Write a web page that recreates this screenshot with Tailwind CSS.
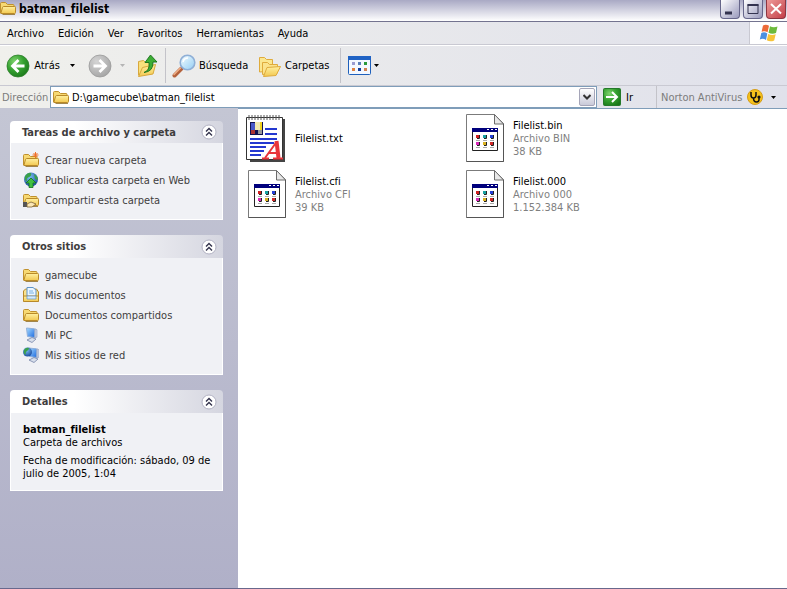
<!DOCTYPE html>
<html lang="es">
<head>
  <meta charset="UTF-8">
  <meta name="viewport" content="width=device-width, initial-scale=1.0">
  <title>batman_filelist</title>
  <script src="https://cdn.jsdelivr.net/npm/@tailwindcss/browser@4"></script>
</head>
<body class="min-h-screen flex flex-col overflow-hidden bg-white text-black text-[11px] leading-[13px] font-['Tahoma','DejaVu_Sans_Condensed','DejaVu_Sans',sans-serif]">

  <!-- shared icons -->
  <svg class="absolute w-0 h-0" aria-hidden="true">
    <defs>
      <linearGradient id="gold" x1="0" y1="0" x2="0" y2="1"><stop offset="0" stop-color="#fff0a0"/><stop offset="1" stop-color="#f2c850"/></linearGradient>
      <radialGradient id="green" cx=".35" cy=".3" r=".8"><stop offset="0" stop-color="#7fd36e"/><stop offset=".5" stop-color="#35a130"/><stop offset="1" stop-color="#187518"/></radialGradient>
      <radialGradient id="grey" cx=".35" cy=".3" r=".8"><stop offset="0" stop-color="#d4d4d4"/><stop offset="1" stop-color="#a2a2a2"/></radialGradient>
      <radialGradient id="globeFill" cx=".4" cy=".3" r=".8"><stop offset="0" stop-color="#7cc0f0"/><stop offset="1" stop-color="#123f98"/></radialGradient>
      <linearGradient id="glass" x1="0" y1="0" x2="1" y2="1"><stop offset="0" stop-color="#f4fdff"/><stop offset="1" stop-color="#93cdf4"/></linearGradient>
      <linearGradient id="screen" x1="0" y1="0" x2="1" y2="1"><stop offset="0" stop-color="#a7dcff"/><stop offset="1" stop-color="#1f6be0"/></linearGradient>
    </defs>
    <symbol id="folder" viewBox="0 0 16 16">
      <path d="M.5 13V3.500q0-1 1-1H5.500L7.500 4.500H13q1 0 1 1V8" fill="#f7d973" stroke="#c0912e"/>
      <path d="M.8 13.500L2.500 7.500q.3-1 1.200-1H14.700q1 0 .8 1v5q0 1-1 1z" fill="url(#gold)" stroke="#b98a28"/>
      <path d="M2.500 14.500h12.500" stroke="#8d6a20" stroke-width=".8"/>
    </symbol>
    <symbol id="pc" viewBox="0 0 16 16">
      <path d="M3.500 1l8 .8v8.700l-7-1z" fill="url(#screen)" stroke="#8fb0dc"/>
      <path d="M12 1.800l2 1v7.400l-2 .6z" fill="#c9d2e4" stroke="#8998b8" stroke-width=".6"/>
      <path d="M4 13l5-2.500 4 1.500-4 3.500z" fill="#d8dfeb" stroke="#7584a8" stroke-width=".8"/>
    </symbol>
    <symbol id="chevrons" viewBox="0 0 16 16">
      <circle cx="8" cy="8" r="7" fill="#fff" stroke="#b2b2c3"/>
      <path d="M5 7.500l3-3 3 3M5 11.500l3-3 3 3" fill="none" stroke="#33334c" stroke-width="1.400"/>
    </symbol>
    <symbol id="file" viewBox="-1 0 40 48">
      <path d="M1.500 .5h28l9 9v38h-37z" fill="#fff" stroke="#7b7b7b"/>
      <path d="M29.500 .5v9.500h9z" fill="#e8e8e8" stroke="#6b6b6b"/>
      <path d="M38.500 10v37.500h-37" fill="none" stroke="#555"/>
      <path d="M7.500 14.500h25v22h-25z" fill="#fff" stroke="#222"/>
      <path d="M7 14h26v4H7z" fill="#00007c"/>
      <path d="M22 15.500h2M26 15.500h2M30 15.500h2" stroke="#fff"/>
      <path d="M11 21h3v3h-3z" fill="#d02020"/><path d="M18 21h3v3h-3z" fill="#18a0a0"/><path d="M25 21h3v3h-3z" fill="#2440d8"/>
      <path d="M11 28h3v3h-3z" fill="#d828b8"/><path d="M18 28h3v3h-3z" fill="#d8b020"/><path d="M25 28h3v3h-3z" fill="#d02828"/>
      <path d="M14.500 21v3.500H12M21.500 21v3.500H19M28.500 21v3.500H26M14.500 28v3.500H12M21.500 28v3.500H19M28.500 28v3.500H26" fill="none" stroke="#222"/>
      <path d="M11 26.500h4M18 26.500h4M25 26.500h4M11 33.500h4M18 33.500h4M25 33.500h4" stroke="#aaa"/>
    </symbol>
  </svg>

  <!-- title bar -->
  <header class="flex items-start h-[21px] bg-linear-to-b from-[#a9a9c4] via-[#d4d4e2] to-white">
    <svg class="w-4 h-4"><use href="#folder"/></svg>
    <h1 class="pl-[3px] pt-[3px] grow font-bold text-xs leading-[13px]">batman_filelist</h1>
    <div class="flex gap-[3px] pr-px">
      <button aria-label="Minimizar" class="w-5 h-[19px] rounded-b-sm border border-t-0 border-[#66668a] bg-linear-to-br from-white to-[#9b9bbd]">
        <svg class="w-full h-full" viewBox="0 0 18 18"><path d="M4 11.500h7v3H4z" fill="#33334f"/></svg>
      </button>
      <button aria-label="Maximizar" class="w-5 h-[19px] rounded-b-sm border border-t-0 border-[#66668a] bg-linear-to-br from-white to-[#9b9bbd]">
        <svg class="w-full h-full" viewBox="0 0 18 18"><path d="M4 4.500h10v9H4z" fill="none" stroke="#33334f"/><path d="M3.500 4h11v2h-11z" fill="#33334f"/></svg>
      </button>
      <button aria-label="Cerrar" class="w-5 h-[19px] rounded-b-sm border border-t-0 border-[#8c3540] bg-linear-to-br from-[#ee9a9a] to-[#c23c48]">
        <svg class="w-full h-full" viewBox="0 0 18 18"><path d="M4 4l10 9.500M14 4L4 13.500" stroke="#fff" stroke-width="2"/></svg>
      </button>
    </div>
  </header>

  <!-- menu bar -->
  <nav class="flex h-6 border-t border-[#73738f] border-b border-b-[#c9c9d2] bg-linear-to-r from-[#f0f0ec] to-[#e0e1eb]">
    <div class="flex grow items-center gap-[14px] pl-[7px]">
      <button>Archivo</button>
      <button>Edición</button>
      <button>Ver</button>
      <button>Favoritos</button>
      <button>Herramientas</button>
      <button>Ayuda</button>
    </div>
    <div class="flex items-center justify-center w-[38px] bg-white border-l border-[#c9c9d2]">
      <svg class="w-5 h-5" viewBox="0 0 20 20">
        <path d="M4 2.500q3-1.800 6 .3L8.600 9.300q-3-2-6-.5z" fill="#ec6a38"/>
        <path d="M11 3.200q3.500 2 7.500.3L17 10q-4 1.500-7.500-.3z" fill="#6dba3c"/>
        <path d="M2.300 10q3-1.500 6 .4L7 17Q4 15 .8 16.500z" fill="#4b90e0"/>
        <path d="M9.200 10.900q3.500 1.800 7.500.3l-1.500 6.300q-4 1.800-7.400-.2z" fill="#f7c438"/>
      </svg>
    </div>
  </nav>

  <!-- toolbar -->
  <div class="flex items-center h-[41px] border-t border-white border-b border-b-[#c9c9d2] bg-linear-to-r from-[#f0f0ec] to-[#e0e1eb]">
    <button class="flex items-center pl-[6px] gap-1">
      <svg class="w-6 h-6" viewBox="0 0 24 24"><circle cx="12" cy="12" r="11" fill="url(#green)" stroke="#2d7f2b" stroke-width=".8"/><path d="M18.500 12H7M12.500 6L6.500 12l6 6" fill="none" stroke="#fff" stroke-width="2.800"/></svg>
      <span class="w-[26px]">Atrás</span>
      <svg class="w-[5px] h-[3px] ml-[6px]" viewBox="0 0 5 3"><path d="M0 0h5L2.500 3z"/></svg>
    </button>
    <button disabled aria-label="Adelante" class="flex items-center pl-[13px] gap-2">
      <svg class="w-6 h-6" viewBox="0 0 24 24"><circle cx="12" cy="12" r="11" fill="url(#grey)" stroke="#999" stroke-width=".8"/><path d="M5.500 12H17M11.500 6l6 6-6 6" fill="none" stroke="#fff" stroke-width="2.800"/></svg>
      <svg class="w-[5px] h-[3px]" viewBox="0 0 5 3"><path d="M0 0h5L2.500 3z" fill="#b5b5b5"/></svg>
    </button>
    <button aria-label="Arriba" class="pl-[11px]">
      <svg class="w-6 h-6" viewBox="0 0 24 24">
        <path d="M2.500 21V7.500l5-1 2 2 6-1V20z" fill="#f9e07c" stroke="#d8a83c"/>
        <path d="M2.500 22.500l4-9 13-3-2.500 9.500z" fill="url(#gold)" stroke="#d8a83c"/>
        <path d="M8 18.500q6-2 5-10H9L14.500 1 21 8h-4q.5 9.500-9 10.500z" fill="#3dae35" stroke="#176f18" stroke-width=".9"/>
      </svg>
    </button>
    <div class="w-px h-[35px] ml-[5px] bg-[#c3c3c9]"></div>
    <button class="flex items-center pl-[6px] gap-[3px]">
      <svg class="w-6 h-6" viewBox="0 0 24 24">
        <path d="M2.500 21.500l7-7" stroke="#b4623c" stroke-width="4" stroke-linecap="round"/><path d="M2 20.500l6.500-6.500" stroke="#f0b088" stroke-width="1.500" stroke-linecap="round"/>
        <circle cx="15.500" cy="8.500" r="7.300" fill="url(#glass)" stroke="#8fafd6" stroke-width="1.600"/>
        <path d="M11 8q1-4 5-4" fill="none" stroke="#fff" stroke-width="1.500"/>
      </svg>
      <span class="w-[48px] text-left">Búsqueda</span>
    </button>
    <button class="flex items-center pl-[11px] gap-[3px]">
      <svg class="w-6 h-6" viewBox="0 0 24 24">
        <path d="M1.500 18V3.500h5l2 2h6V17z" fill="#fbe790" stroke="#dfab3c"/>
        <path d="M4.500 20.500V8.500h5l2 2h8V19z" fill="#fbe38c" stroke="#dfab3c"/>
        <path d="M5.500 22.500l3.500-9 13.500-1-4.500 9z" fill="url(#gold)" stroke="#dfab3c"/>
      </svg>
      <span class="w-[45px] text-left">Carpetas</span>
    </button>
    <div class="w-px h-[35px] ml-[10px] bg-[#c3c3c9]"></div>
    <button aria-label="Vistas" class="flex items-center pl-[7px] gap-[3px]">
      <svg class="w-[23px] h-[19px]" viewBox="0 0 23 19">
        <rect x=".5" y=".5" width="22" height="18" rx="1" fill="#f4f8ff" stroke="#1f60bb"/>
        <path d="M0 0h23v4H0z" fill="#1f62c4"/>
        <path d="M4 6h3v3H4z" fill="#9a9bd0"/><path d="M10 6h3v3h-3z" fill="#5b7fb8"/><path d="M16 6h3v3h-3z" fill="#2a9a3a"/>
        <path d="M4 12h3v3H4z" fill="#e08240"/><path d="M10 12h3v3h-3z" fill="#123d9a"/><path d="M16 12h3v3h-3z" fill="#d08050"/>
      </svg>
      <svg class="w-[5px] h-[3px]" viewBox="0 0 5 3"><path d="M0 0h5L2.500 3z"/></svg>
    </button>
  </div>

  <!-- address bar -->
  <form class="flex items-center h-[22px] bg-linear-to-r from-[#f0f0ec] to-[#e0e1eb]">
    <label for="address" class="w-[50px] pl-[2px] text-[#7c7c7c]">Dirección</label>
    <div class="flex grow items-center h-[22px] border border-[#7f9db9] bg-white">
      <svg class="w-4 h-4 ml-[2px]"><use href="#folder"/></svg>
      <input id="address" type="text" value="D:\gamecube\batman_filelist" class="grow min-w-0 pl-[3px] outline-none">
      <button type="button" aria-label="Mostrar direcciones" class="flex items-center justify-center w-4 h-[18px] mr-px rounded-xs border border-[#a5a5b8] bg-linear-to-b from-white to-[#c9cad9]">
        <svg class="w-2 h-[6px]" viewBox="0 0 8 6"><path d="M.5 1L4 4.500 7.500 1" fill="none" stroke="#333" stroke-width="2"/></svg>
      </button>
    </div>
    <button class="flex items-center pl-[6px] gap-[5px] w-[59px]">
      <svg class="w-[18px] h-[18px]" viewBox="0 0 18 18"><rect x=".5" y=".5" width="17" height="17" rx="1" fill="url(#green)" stroke="#24792a"/><path d="M3 9h10M9 4l5 5-5 5" fill="none" stroke="#fff" stroke-width="2"/></svg>
      Ir
    </button>
    <button type="button" class="flex items-center h-full w-[131px] pl-1 border-l border-[#c3c3c9] text-[#7c7c7c]">
      <span class="w-[86px] text-left whitespace-nowrap">Norton AntiVirus</span>
      <svg class="w-4 h-4" viewBox="0 0 16 16"><circle cx="8" cy="8" r="7.500" fill="#f6c21c" stroke="#d59c18"/><path d="M4 3v3q0 3 2.500 3T9 6V3M6.500 9q0 4 3 4t2.500-4" fill="none" stroke="#111" stroke-width="1.500"/><circle cx="12" cy="8" r="1.600" fill="#111"/></svg>
      <svg class="w-[5px] h-[3px] ml-2" viewBox="0 0 5 3"><path d="M0 0h5L2.500 3z"/></svg>
    </button>
  </form>

  <div class="flex grow border-b border-[#68688c]">
    <!-- task pane -->
    <aside class="flex flex-col gap-[15px] w-[238px] shrink-0 pl-[10px] pr-[15px] pt-[13px] bg-linear-to-b from-[#c4c6d4] to-[#b0b0c8] text-[#3f3d3d]">
      <section>
        <div class="flex items-center justify-between h-[22px] pl-3 pr-[6px] rounded-t-sm bg-linear-to-r from-white from-30% to-[#d5d6e0]">
          <h2 class="font-bold">Tareas de archivo y carpeta</h2>
          <button aria-label="Contraer" class="w-4 h-4"><svg class="w-4 h-4"><use href="#chevrons"/></svg></button>
        </div>
        <ul class="border border-t-0 border-white bg-[#f0f1f5] pl-3 pt-[7px] pb-[9px]">
          <li><a href="#" class="flex items-center gap-[6px] h-5">
            <svg class="w-4 h-4" viewBox="0 0 16 16"><use href="#folder"/><path d="M12.500 0v6M9.500 3h6M10.500 1l4 4M14.500 1l-4 4" stroke="#f07028"/></svg>
            Crear nueva carpeta</a></li>
          <li><a href="#" class="flex items-center gap-[6px] h-5">
            <svg class="w-4 h-4" viewBox="0 0 16 16"><circle cx="8" cy="7.500" r="7" fill="url(#globeFill)"/><path d="M2 4q3-4 6-3 1 3-2 4t-2 4Q1 9 2 4zM11 2q4 2 4 6l-3-1z" fill="#3aa04a"/><path d="M8 6l5 5h-3v4.500H6V11H3z" fill="#3fc040" stroke="#12701c" stroke-width=".8"/></svg>
            Publicar esta carpeta en Web</a></li>
          <li><a href="#" class="flex items-center gap-[6px] h-5">
            <svg class="w-4 h-4" viewBox="0 0 16 16"><use href="#folder"/><path d="M0 10h4v5H0z" fill="#555"/><path d="M4 12l4-2 5 2-4 3H4z" fill="#fbe7b4" stroke="#7c6236" stroke-width=".8"/></svg>
            Compartir esta carpeta</a></li>
        </ul>
      </section>

      <section>
        <div class="flex items-center justify-between h-[23px] pl-3 pr-[6px] rounded-t-sm bg-linear-to-r from-white from-30% to-[#d5d6e0]">
          <h2 class="font-bold">Otros sitios</h2>
          <button aria-label="Contraer" class="w-4 h-4"><svg class="w-4 h-4"><use href="#chevrons"/></svg></button>
        </div>
        <ul class="border border-t-0 border-white bg-[#f0f1f5] pl-3 pt-[7px] pb-[9px]">
          <li><a href="#" class="flex items-center gap-[6px] h-5"><svg class="w-4 h-4"><use href="#folder"/></svg>gamecube</a></li>
          <li><a href="#" class="flex items-center gap-[6px] h-5">
            <svg class="w-4 h-4" viewBox="0 0 16 16"><path d="M.5 14V4l2-2h11l2 3v9z" fill="#fbe38c" stroke="#b8892a"/><path d="M4 .5h6L13 3v9H4z" fill="#e9f5ff" stroke="#5e93c8"/><path d="M6 4h4M6 6h5" stroke="#79b2e4"/><path d="M.5 9h15v5.500H.5z" fill="url(#gold)" stroke="#b8892a"/><path d="M4 9h9v3H4z" fill="#d7ebfa" stroke="#5e93c8" stroke-width=".7"/></svg>
            Mis documentos</a></li>
          <li><a href="#" class="flex items-center gap-[6px] h-5"><svg class="w-4 h-4"><use href="#folder"/></svg>Documentos compartidos</a></li>
          <li><a href="#" class="flex items-center gap-[6px] h-5"><svg class="w-4 h-4"><use href="#pc"/></svg>Mi PC</a></li>
          <li><a href="#" class="flex items-center gap-[6px] h-5">
            <svg class="w-4 h-4" viewBox="0 0 16 16"><use href="#pc" x="2" width="16" height="16"/><circle cx="4.500" cy="5" r="4.500" fill="url(#globeFill)"/><path d="M1 3q2-3 5-2 0 2-2 3t-1 4Q0 7 1 3z" fill="#3aa04a"/></svg>
            Mis sitios de red</a></li>
        </ul>
      </section>

      <section>
        <div class="flex items-center justify-between h-[23px] pl-3 pr-[6px] rounded-t-sm bg-linear-to-r from-white from-30% to-[#d5d6e0]">
          <h2 class="font-bold">Detalles</h2>
          <button aria-label="Contraer" class="w-4 h-4"><svg class="w-4 h-4"><use href="#chevrons"/></svg></button>
        </div>
        <div class="border border-t-0 border-white bg-[#f0f1f5] pl-3 pr-2 pt-[10px] pb-[10px] text-black">
          <p class="font-bold">batman_filelist</p>
          <p>Carpeta de archivos</p>
          <p class="pt-[5px]">Fecha de modificación: sábado, 09 de julio de 2005, 1:04</p>
        </div>
      </section>
    </aside>

    <!-- files -->
    <main class="grow border-t border-[#7f9db9]">
      <ul class="grid grid-cols-[218px_218px] auto-rows-[56px] pt-px pl-2 text-[#7f7f7f]">
        <li class="flex items-center gap-[9px]">
          <svg class="w-10 h-12" viewBox="0 0 40 48">
            <path d="M4 5h35v43H4z" fill="#444"/>
            <path d="M.5 3.500h36v42H.5z" fill="#fff" stroke="#333"/>
            <path d="M3 1v5M6 1v5M9 1v5M12 1v5M15 1v5M18 1v5M21 1v5M24 1v5M27 1v5M30 1v5M33 1v5" stroke="#555"/>
            <path d="M4 8h13v13H4z" fill="#111150"/><path d="M5 9h4v7H5z" fill="#4858c8"/><path d="M9 8h5v8H9z" fill="#f3e9b0"/><path d="M14 8h2v8h-2z" fill="#f3d41c"/><path d="M5 16h4v4H5z" fill="#a33"/><path d="M12 16h4v4h-4z" fill="#999"/>
            <path d="M19 15h12M19 20h12M4 25h27M4 29h24M4 33h16M4 37h14M4 41h11" stroke="#2438d0" stroke-width="2"/>
            <path d="M16 44.500h7M27 44.500h10" stroke="#e8353a" stroke-width="2"/>
            <path d="M19 44L30.500 28M22 39h9" fill="none" stroke="#e8353a" stroke-width="2"/><path d="M30.500 27l2 17" stroke="#e8353a" stroke-width="4"/>
          </svg>
          <p class="text-black">Filelist.txt</p>
        </li>
        <li class="flex items-center gap-[9px]">
          <svg class="w-10 h-12"><use href="#file"/></svg>
          <div><p class="text-black">Filelist.bin</p><p>Archivo BIN</p><p>38 KB</p></div>
        </li>
        <li class="flex items-center gap-[9px]">
          <svg class="w-10 h-12"><use href="#file"/></svg>
          <div><p class="text-black">Filelist.cfi</p><p>Archivo CFI</p><p>39 KB</p></div>
        </li>
        <li class="flex items-center gap-[9px]">
          <svg class="w-10 h-12"><use href="#file"/></svg>
          <div><p class="text-black">Filelist.000</p><p>Archivo 000</p><p>1.152.384 KB</p></div>
        </li>
      </ul>
    </main>
  </div>
</body>
</html>
